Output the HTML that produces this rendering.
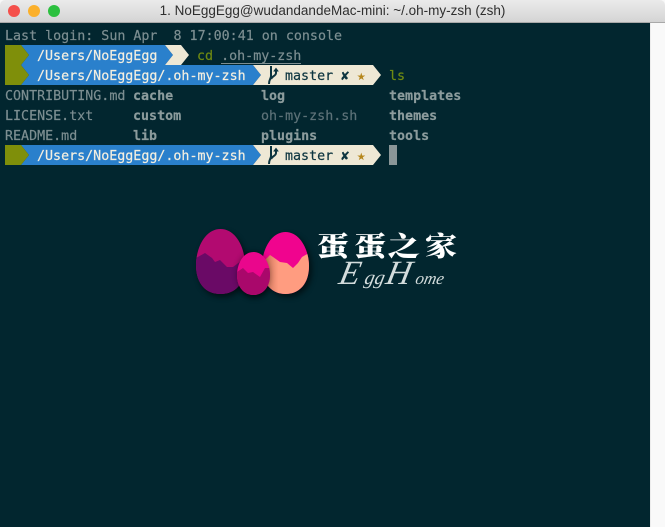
<!DOCTYPE html>
<html><head><meta charset="utf-8">
<style>
html,body{margin:0;padding:0;width:665px;height:527px;overflow:hidden;background:#f8f8f8}
#t{position:absolute;left:0;top:0;width:665px;height:22px;background:linear-gradient(#ebebeb,#d4d4d4);border-bottom:1px solid #a9a9a9;border-radius:5px 5px 0 0;
font:13.5px/21px "Liberation Sans",sans-serif;color:#2e2e2e;text-align:center}
.l{position:absolute;top:5px;width:12px;height:12px;border-radius:50%}
#b{position:absolute;left:0;top:23px;width:650px;height:504px;background:#02262f}
#s{position:absolute;left:650px;top:23px;width:15px;height:504px;background:#f9f9f9;border-left:1px solid #ececec;box-sizing:border-box}
#g{position:absolute;left:0;top:0}
.x{position:absolute;margin-top:2px;font:13.33px/20px "DejaVu Sans Mono","Liberation Mono",monospace;white-space:pre;color:#7c8e91;-webkit-text-stroke:.2px currentColor}
.b{font-weight:bold;color:#8c9c9d}
.d{color:#5d7278}
.w{color:#f4efe0}
.m{color:#0d3540}
</style></head><body>
<div id="t">1. NoEggEgg@wudandandeMac-mini: ~/.oh-my-zsh (zsh)
<div class="l" style="left:8px;background:#f4504b"></div>
<div class="l" style="left:28px;background:#fbb02b"></div>
<div class="l" style="left:48px;background:#2cc03f"></div>
</div>
<div id="b"></div><div id="s"></div>
<svg id="g" width="665" height="527" viewBox="0 0 665 527">
<defs>
<path id="e1" d="M220.5 229C236 229 245 248 245 265C245 284 235 294 220.5 294C206 294 196 284 196 265C196 248 205 229 220.5 229Z"/>
<path id="e2" d="M285.5 232C300 232 309 250 309 266C309 284 299 294 285.5 294C272 294 262 284 262 266C262 250 271 232 285.5 232Z"/>
<path id="e3" d="M253.5 252C264 252 270 264 270 275C270 287 263 295 253.5 295C244 295 237 287 237 275C237 264 243 252 253.5 252Z"/>
<clipPath id="c1"><use href="#e1"/></clipPath>
<clipPath id="c2"><use href="#e2"/></clipPath>
<clipPath id="c3"><use href="#e3"/></clipPath>
<filter id="sh" x="-30%" y="-30%" width="160%" height="160%"><feGaussianBlur stdDeviation="3"/></filter>
<linearGradient id="gs" x1="0" x2="1" y1="0" y2="0"><stop offset="0" stop-color="#c06a50"/><stop offset=".35" stop-color="#ff9c80"/></linearGradient>
</defs>
<!-- row 2 -->
<polygon points="21,45 165,45 173,55 165,65 21,65 29,55" fill="#2a80cc"/>
<polygon points="5,45 21,45 29,55 21,65 5,65" fill="#7f8f0a"/>
<polygon points="165,45 181,45 189,55 181,65 165,65 173,55" fill="#eee8d5"/>
<!-- row 3 -->
<polygon points="21,65 253,65 261,75 253,85 21,85 29,75" fill="#2a80cc"/>
<polygon points="5,65 21,65 29,75 21,85 5,85" fill="#7f8f0a"/>
<polygon points="253,65 373,65 381,75 373,85 253,85 261,75" fill="#eee8d5"/>
<!-- row 7 -->
<polygon points="21,145 253,145 261,155 253,165 21,165 29,155" fill="#2a80cc"/>
<polygon points="5,145 21,145 29,155 21,165 5,165" fill="#7f8f0a"/>
<polygon points="253,145 373,145 381,155 373,165 253,165 261,155" fill="#eee8d5"/>
<rect x="389" y="145" width="8" height="20" fill="#8a9698"/>
<rect x="221" y="63" width="80" height="1" fill="#7c8e91"/>
<!-- branch glyphs -->
<g id="br" fill="none" stroke="#0d3540" stroke-width="2">
<path d="M271 66V76C271 79 269 79 269 84"/>
<path d="M276 70V73C276 76 272 76 271 79"/>
<path d="M273.7 71.5L276 68.5L278.3 71.5" fill="#0d3540" stroke-width="1"/>
</g>
<use href="#br" y="80"/>
<!-- logo -->
<g opacity=".55" filter="url(#sh)"><use href="#e1" y="3" x="2" fill="#000"/><use href="#e2" y="3" x="3" fill="#000"/><use href="#e3" y="3" x="1" fill="#000"/></g>
<g clip-path="url(#c1)"><rect x="190" y="225" width="60" height="75" fill="#b20a70"/>
<path d="M196 258L205 253L212 258L215 262L220 260L227 267L233 267L245 258V296H196Z" fill="#6a0a66"/></g>
<g clip-path="url(#c2)"><rect x="258" y="228" width="55" height="70" fill="#f0048e"/>
<path d="M262 262L267 258L270 255L273 257L280 262L287 263L293 268L298 263L302 257L309 253V296H262Z" fill="url(#gs)"/></g>
<use href="#e3" fill="#000" opacity=".35" filter="url(#sh)"/>
<g clip-path="url(#c3)"><rect x="235" y="250" width="38" height="48" fill="#ea068c"/>
<path d="M237 272L243 268L248 273L253 272L260 277L265 268L270 268V297H237Z" fill="#a9086b"/></g>
<g transform="scale(1.2 1)"><text y="256" font-family="'Noto Serif CJK SC','Noto Sans CJK SC',serif" font-weight="900" font-size="27" fill="#fff"><tspan x="264">蛋</tspan><tspan x="295">蛋</tspan><tspan x="323">之</tspan><tspan x="354">家</tspan></text></g>
<g transform="skewX(-12)" font-family="'Liberation Serif',serif" font-style="italic" fill="#d3dcdc"><text y="284"><tspan x="398" font-size="34">E</tspan><tspan x="424" font-size="20">gg</tspan><tspan x="445" font-size="34">H</tspan><tspan x="475" font-size="17">ome</tspan></text></g>
</svg>
<div class="x" style="left:5px;top:25px">Last login: Sun Apr  8 17:00:41 on console</div>
<div class="x w" style="left:37px;top:45px">/Users/NoEggEgg</div>
<div class="x" style="left:197px;top:45px"><span style="color:#6f8a12">cd</span> <span>.oh-my-zsh</span></div>
<div class="x w" style="left:37px;top:65px">/Users/NoEggEgg/.oh-my-zsh</div>
<div class="x m" style="left:285px;top:65px">master <b>✘</b> <span style="color:#b5861a">★</span></div>
<div class="x" style="left:389px;top:65px;color:#6f8a12">ls</div>
<div class="x" style="left:5px;top:85px">CONTRIBUTING.md</div>
<div class="x b" style="left:133px;top:85px">cache</div>
<div class="x b" style="left:261px;top:85px">log</div>
<div class="x b" style="left:389px;top:85px">templates</div>
<div class="x" style="left:5px;top:105px">LICENSE.txt</div>
<div class="x b" style="left:133px;top:105px">custom</div>
<div class="x d" style="left:261px;top:105px">oh-my-zsh.sh</div>
<div class="x b" style="left:389px;top:105px">themes</div>
<div class="x" style="left:5px;top:125px">README.md</div>
<div class="x b" style="left:133px;top:125px">lib</div>
<div class="x b" style="left:261px;top:125px">plugins</div>
<div class="x b" style="left:389px;top:125px">tools</div>
<div class="x w" style="left:37px;top:145px">/Users/NoEggEgg/.oh-my-zsh</div>
<div class="x m" style="left:285px;top:145px">master <b>✘</b> <span style="color:#b5861a">★</span></div>
</body></html>
